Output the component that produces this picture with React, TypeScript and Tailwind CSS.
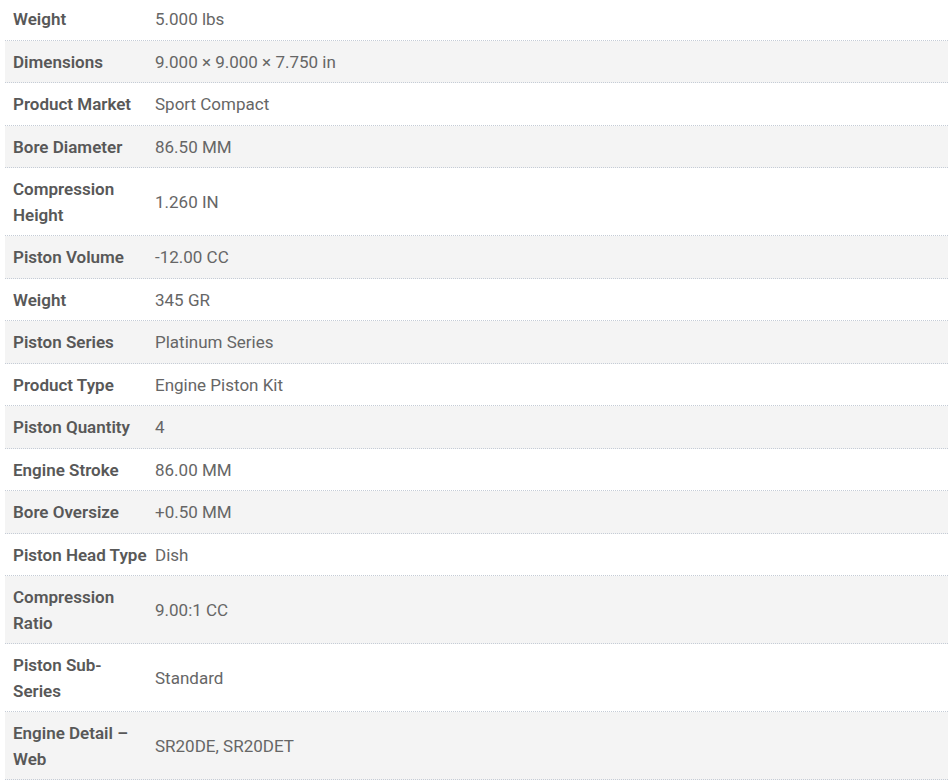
const rows: [string, string][] = [
  ['Weight', '5.000 lbs'],
  ['Dimensions', '9.000 × 9.000 × 7.750 in'],
  ['Product Market', 'Sport Compact'],
  ['Bore Diameter', '86.50 MM'],
  ['Compression Height', '1.260 IN'],
  ['Piston Volume', '-12.00 CC'],
  ['Weight', '345 GR'],
  ['Piston Series', 'Platinum Series'],
  ['Product Type', 'Engine Piston Kit'],
  ['Piston Quantity', '4'],
  ['Engine Stroke', '86.00 MM'],
  ['Bore Oversize', '+0.50 MM'],
  ['Piston Head Type', 'Dish'],
  ['Compression Ratio', '9.00:1 CC'],
  ['Piston Sub-Series', 'Standard'],
  ['Engine Detail – Web', 'SR20DE, SR20DET'],
];

export default function App() {
  return (
    <div className="bg-white pl-[5px] -mt-[2px]" style={{ fontFamily: 'Roboto, "Liberation Sans", sans-serif' }}>
      <div className="text-[17px] leading-[1.5]">
        {rows.map(([label, value], i) => (
          <div
            key={i}
            className={`grid grid-cols-[142px_1fr] border-b border-dotted border-[#c5ccd6] ${
              i % 2 === 1 ? 'bg-[#f4f4f4]' : 'bg-white'
            }`}
          >
            <div className="pt-[9px] pb-[7px] pl-2 font-semibold text-[#585858]">{label}</div>
            <div className="pt-[9px] pb-[7px] pl-2 flex items-center text-[#666]">{value}</div>
          </div>
        ))}
      </div>
    </div>
  );
}
